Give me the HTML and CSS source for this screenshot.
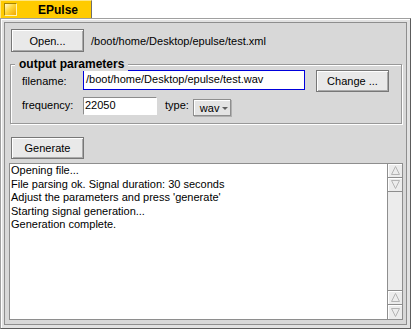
FILE: index.html
```html
<!DOCTYPE html>
<html>
<head>
<meta charset="utf-8">
<title>EPulse</title>
<link rel="stylesheet" href="styles.css">
</head>
<body>
<div class="tab"><span class="close"></span><span class="title">EPulse</span></div>
<div class="window">
  <div class="content">
    <div class="row-open">
      <button class="btn btn-open">Open...</button>
      <span class="path">/boot/home/Desktop/epulse/test.xml</span>
    </div>
    <div class="group">
      <span class="legend">output parameters</span>
      <div class="grow r1">
        <span class="label">filename:</span>
        <div class="field field-focus">/boot/home/Desktop/epulse/test.wav</div>
        <button class="btn btn-change">Change ...</button>
      </div>
      <div class="grow r2">
        <span class="label">frequency:</span>
        <div class="field field-freq">22050</div>
        <span class="type-label">type:</span>
        <div class="menu">wav<span class="tri"></span></div>
      </div>
    </div>
    <div class="row-gen"><button class="btn btn-gen">Generate</button></div>
    <div class="log">
      <div class="log-text">
        <div>Opening file...</div>
        <div>File parsing ok. Signal duration: 30 seconds</div>
        <div>Adjust the parameters and press 'generate'</div>
        <div>Starting signal generation...</div>
        <div>Generation complete.</div>
      </div>
      <div class="sb">
        <div class="arrow"><svg width="13" height="13" viewBox="0 0 13 13"><polygon points="6.5,2.5 2.5,10.5 10.5,10.5" fill="none" stroke="#b4b4b4"/></svg></div>
        <div class="arrow"><svg width="13" height="13" viewBox="0 0 13 13"><polygon points="2.5,2.5 10.5,2.5 6.5,10.5" fill="none" stroke="#b4b4b4"/></svg></div>
        <div class="track"></div>
        <div class="arrow arrow-top"><svg width="13" height="13" viewBox="0 0 13 13"><polygon points="6.5,2.5 2.5,10.5 10.5,10.5" fill="none" stroke="#b4b4b4"/></svg></div>
        <div class="arrow"><svg width="13" height="13" viewBox="0 0 13 13"><polygon points="2.5,2.5 10.5,2.5 6.5,10.5" fill="none" stroke="#b4b4b4"/></svg></div>
      </div>
    </div>
  </div>
</div>
</body>
</html>
```
FILE: styles.css
```css
* { box-sizing: border-box; }
html, body { margin: 0; padding: 0; background: #ffffff; }
body {
  width: 411px;
  height: 329px;
  overflow: hidden;
  font-family: "Liberation Sans", Arial, sans-serif;
  font-size: 11px;
  color: #000;
}
.tab {
  width: 92px;
  height: 18px;
  background: #ffcb00;
  border-right: 1px solid #6e6e6e;
  border-left: 1px solid #ffe680;
  border-top: 1px solid #ffe680;
  display: flex;
  align-items: center;
}
.close {
  width: 13px;
  height: 13px;
  margin-left: 3px;
  border: 1px solid;
  border-color: #a88400 #fff4b0 #fff4b0 #a88400;
  background: linear-gradient(135deg, #fff8d0 0%, #ffd83a 45%, #f2a600 100%);
}
.title {
  margin-left: 21px;
  font-weight: bold;
  font-size: 12px;
}
.window {
  height: 311px;
  border: 1px solid;
  border-color: #a0a0a0 #5c5c5c #5c5c5c #a0a0a0;
  background: #e2e2e2;
  padding: 3px;
  box-shadow: inset 1px 1px 0 #ffffff;
}
.content {
  height: 100%;
  border: 1px solid #8e8e8e;
  background: #d8d8d8;
  display: flex;
  flex-direction: column;
}
.btn {
  font-family: "Liberation Sans", Arial, sans-serif;
  font-size: 11px;
  color: #000;
  background: #e9e9e9;
  border: 1px solid #777;
  box-shadow: inset 1px 1px 0 #fff, inset -1px -1px 0 #aaaaaa;
  padding: 0;
  width: 73px;
  height: 23px;
}
.row-open {
  display: flex;
  align-items: center;
  padding: 6px 0 0 6px;
}
.path { margin-left: 7px; }
.group {
  position: relative;
  margin: 12px 4px 0 5px;
  border: 1px solid #989898;
  box-shadow: inset 1px 1px 0 #fff, 1px 1px 0 #fff;
  padding: 5px 0 7px 11px;
  display: flex;
  flex-direction: column;
  gap: 5px;
}
.legend {
  position: absolute;
  top: -8px;
  left: 4px;
  padding: 0 4px;
  background: #d8d8d8;
  font-weight: bold;
  font-size: 12px;
  line-height: 14px;
}
.grow { display: flex; }
.r1 { height: 22px; align-items: flex-start; }
.r2 { height: 19px; align-items: flex-start; }
.label { width: 61px; }
.r1 .label { padding-top: 5px; }
.r2 .label { padding-top: 2px; }
.field {
  background: #fff;
  padding-left: 2px;
  white-space: nowrap;
}
.field-focus {
  width: 222px;
  height: 20px;
  border: 1px solid #0000dc;
  line-height: 16px;
  padding-left: 2px;
}
.btn-change { margin-left: 11px; height: 22px; }
.field-freq {
  width: 74px;
  height: 18px;
  border: 1px solid;
  border-color: #8c8c8c #ffffff #ffffff #8c8c8c;
  line-height: 15px;
  padding-left: 1px;
}
.type-label { margin-left: 8px; padding-top: 2px; }
.menu {
  margin-left: 4px;
  margin-top: 2px;
  width: 38px;
  height: 17px;
  border: 1px solid #8e8e8e;
  background: #e4e4e4;
  box-shadow: inset 1px 1px 0 #fff, 1px 1px 0 #b0b0b0;
  display: flex;
  align-items: center;
  padding-left: 6px;
  line-height: 14px;
}
.tri {
  margin-left: 3px;
  margin-top: 2px;
  width: 0;
  height: 0;
  border-left: 3px solid transparent;
  border-right: 3px solid transparent;
  border-top: 3px solid #606060;
}
.row-gen { padding: 13px 0 0 6px; }
.btn-gen { height: 22px; }
.log {
  flex: 1;
  margin: 4px 3px 4px 4px;
  border: 1px solid #8e8e8e;
  display: flex;
  background: #fff;
}
.log-text {
  flex: 1;
  padding-left: 1px;
  line-height: 13.5px;
}
.sb {
  width: 15px;
  border-left: 1px solid #8e8e8e;
  display: flex;
  flex-direction: column;
  background: #ececec;
}
.arrow {
  height: 14px;
  border-bottom: 1px solid #8e8e8e;
  background: #ececec;
  box-shadow: inset 1px 1px 0 #fff;
  display: flex;
  align-items: center;
  justify-content: center;
}
.arrow-top { border-top: 1px solid #8e8e8e; height: 15px; }
.arrow:last-child { border-bottom: none; height: 14px; }
.track { flex: 1; background: #ececec; }
```
